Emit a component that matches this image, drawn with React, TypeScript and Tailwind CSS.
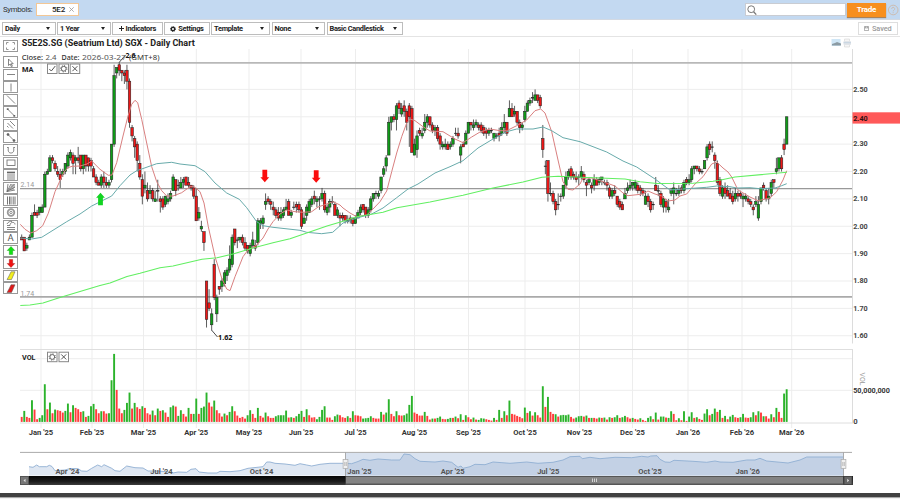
import React from 'react';

type Candle = [number, number, number, number];

// open, high, low, close in cents
const candles: Candle[] = [
  [196, 197, 195, 195], [196, 196, 191, 191], [192, 194, 191, 193], [195, 197, 195, 196], [196, 205, 196, 204], [205, 208, 204, 204],
  [205, 206, 203, 204], [205, 207, 204, 207], [205, 208, 205, 207], [207, 220, 207, 219], [219, 221, 219, 220], [220, 226, 220, 225],
  [225, 226, 223, 224], [223, 224, 220, 221], [220, 222, 218, 219], [219, 221, 214, 217], [219, 221, 218, 220], [220, 223, 219, 223],
  [222, 227, 221, 226], [225, 228, 224, 227], [226, 227, 219, 223], [224, 226, 219, 225], [225, 229, 223, 224], [226, 226, 220, 221],
  [221, 226, 219, 226], [226, 226, 220, 222], [225, 225, 220, 222], [224, 225, 220, 222], [221, 222, 218, 218], [218, 219, 215, 216],
  [216, 217, 215, 215], [215, 219, 214, 218], [218, 220, 214, 216], [216, 218, 214, 215], [215, 217, 214, 216], [217, 230, 216, 230],
  [230, 259, 229, 255], [256, 258, 254, 258], [259, 260, 255, 257], [257, 257, 253, 256], [256, 257, 252, 255], [257, 259, 250, 253],
  [253, 254, 236, 238], [236, 237, 231, 233], [232, 233, 225, 229], [230, 231, 220, 224], [223, 226, 217, 218], [217, 219, 208, 211],
  [214, 220, 212, 215], [213, 216, 209, 210], [212, 215, 210, 213], [213, 214, 209, 210], [209, 213, 209, 210], [213, 217, 209, 213],
  [210, 211, 205, 209], [210, 211, 206, 207], [208, 211, 207, 211], [209, 212, 208, 210], [210, 213, 209, 212], [213, 219, 213, 218],
  [217, 217, 211, 213], [215, 217, 213, 215], [214, 218, 214, 216], [216, 218, 214, 217], [218, 218, 215, 215], [216, 218, 214, 215],
  [215, 215, 213, 214], [214, 215, 210, 211], [211, 214, 202, 202], [203, 207, 202, 205], [199, 202, 198, 200], [198, 198, 191, 194],
  [180, 180, 163, 166], [172, 177, 169, 170], [164, 170, 162, 168], [186, 188, 173, 174], [168, 175, 165, 174], [178, 178, 175, 177],
  [178, 181, 176, 180], [179, 184, 178, 183], [182, 185, 180, 184], [184, 193, 183, 188], [186, 197, 185, 196], [199, 199, 193, 194],
  [195, 196, 192, 195], [195, 196, 194, 196], [196, 197, 193, 194], [194, 196, 191, 192], [193, 193, 190, 191], [190, 194, 189, 193],
  [193, 198, 192, 195], [193, 195, 191, 192], [194, 203, 193, 202], [201, 203, 199, 202], [201, 204, 199, 203], [208, 212, 206, 209],
  [210, 211, 208, 209], [209, 210, 206, 208], [207, 209, 204, 206], [206, 207, 203, 204], [205, 207, 202, 203], [203, 207, 202, 205],
  [204, 207, 203, 206], [206, 210, 206, 207], [209, 210, 204, 204], [204, 206, 203, 205], [207, 209, 206, 207], [208, 209, 205, 207],
  [208, 209, 205, 206], [206, 207, 199, 200], [201, 205, 201, 203], [204, 208, 202, 207], [205, 210, 205, 209], [208, 211, 207, 210],
  [211, 213, 208, 210], [209, 211, 207, 210], [210, 211, 206, 210], [210, 214, 209, 212], [212, 213, 205, 206], [205, 208, 204, 207],
  [207, 210, 205, 209], [209, 211, 208, 209], [208, 209, 204, 204], [204, 207, 203, 206], [204, 205, 200, 203], [204, 205, 202, 203],
  [204, 204, 201, 202], [202, 204, 201, 202], [203, 204, 201, 202], [203, 203, 200, 201], [201, 204, 201, 203], [203, 206, 203, 205],
  [205, 208, 204, 207], [208, 208, 205, 206], [207, 207, 203, 204], [204, 207, 203, 206], [206, 211, 205, 210], [210, 212, 209, 212],
  [212, 213, 210, 212], [211, 213, 210, 212], [213, 218, 212, 218], [219, 222, 218, 221], [222, 226, 220, 225], [226, 240, 226, 238],
  [238, 240, 235, 240], [240, 241, 238, 239], [239, 245, 235, 244], [245, 246, 241, 243], [241, 245, 240, 243], [244, 246, 240, 242],
  [242, 243, 235, 238], [244, 245, 229, 240], [243, 244, 227, 227], [226, 232, 226, 230], [228, 235, 225, 233], [235, 236, 233, 234],
  [233, 236, 232, 234], [235, 241, 234, 238], [238, 241, 236, 240], [240, 240, 236, 237], [237, 238, 234, 235], [235, 237, 233, 236],
  [236, 237, 231, 232], [233, 234, 228, 230], [229, 231, 228, 230], [229, 232, 228, 230], [230, 231, 228, 228], [229, 231, 228, 230],
  [230, 233, 229, 232], [234, 236, 233, 234], [234, 236, 232, 233], [226, 230, 223, 229], [230, 231, 229, 229], [230, 235, 230, 234],
  [234, 238, 234, 238], [238, 238, 235, 237], [236, 239, 235, 237], [237, 239, 236, 238], [237, 238, 235, 236], [237, 238, 234, 235],
  [236, 237, 233, 234], [235, 236, 232, 234], [234, 236, 233, 235], [235, 236, 234, 235], [232, 234, 231, 234], [233, 234, 232, 233],
  [234, 236, 231, 233], [234, 238, 233, 236], [236, 241, 234, 238], [238, 238, 233, 234], [240, 246, 240, 243], [243, 245, 240, 240],
  [241, 244, 240, 242], [242, 242, 237, 238], [238, 239, 234, 236], [236, 238, 235, 237], [239, 244, 238, 242], [242, 246, 242, 245],
  [245, 247, 244, 246], [247, 249, 245, 247], [246, 250, 246, 248], [248, 248, 245, 246], [247, 248, 243, 244], [232, 237, 225, 228],
  [222, 224, 219, 222], [224, 224, 209, 212], [212, 216, 211, 212], [212, 213, 208, 209], [209, 210, 204, 206], [208, 212, 206, 208],
  [211, 212, 209, 211], [211, 215, 210, 215], [215, 220, 214, 218], [218, 221, 217, 220], [221, 222, 217, 218], [219, 220, 217, 218],
  [218, 220, 216, 217], [218, 219, 215, 218], [218, 222, 217, 220], [219, 220, 216, 217], [216, 217, 211, 215], [216, 218, 215, 217],
  [215, 216, 212, 214], [215, 219, 213, 217], [217, 218, 215, 215], [216, 218, 215, 217], [217, 218, 215, 218], [216, 217, 215, 216],
  [216, 217, 213, 215], [214, 215, 210, 211], [211, 214, 210, 213], [213, 215, 211, 212], [211, 211, 207, 208], [209, 210, 206, 207],
  [208, 209, 206, 206], [210, 214, 210, 212], [213, 216, 212, 214], [214, 217, 213, 215], [215, 216, 213, 216], [214, 217, 213, 216],
  [215, 216, 212, 213], [214, 215, 211, 213], [213, 214, 211, 212], [208, 213, 208, 211], [211, 212, 207, 209], [209, 210, 205, 206],
  [208, 209, 206, 208], [215, 218, 213, 213], [213, 215, 211, 213], [212, 213, 207, 208], [207, 211, 205, 210], [209, 210, 205, 207],
  [206, 210, 205, 207], [212, 214, 211, 213], [212, 216, 208, 214], [212, 214, 211, 212], [212, 215, 211, 213], [214, 215, 212, 213],
  [213, 217, 212, 216], [217, 218, 215, 216], [216, 219, 215, 217], [217, 222, 216, 221], [221, 222, 219, 222], [222, 222, 220, 221],
  [221, 222, 219, 220], [220, 221, 219, 220], [221, 224, 221, 224], [225, 230, 224, 229], [230, 231, 226, 228], [229, 231, 227, 229],
  [226, 227, 221, 224], [223, 224, 215, 216], [217, 218, 211, 212], [211, 215, 210, 214], [214, 216, 210, 212], [213, 215, 211, 211],
  [212, 214, 210, 210], [211, 213, 208, 209], [210, 214, 209, 212], [212, 213, 209, 211], [212, 213, 210, 211], [210, 212, 207, 211],
  [210, 212, 209, 211], [210, 211, 208, 209], [209, 210, 207, 208], [207, 208, 204, 206], [208, 211, 207, 209], [203, 211, 202, 208],
  [209, 214, 208, 214], [215, 216, 213, 214], [213, 214, 209, 210], [210, 214, 208, 211], [212, 217, 211, 216], [217, 217, 214, 216],
  [220, 225, 219, 221], [221, 225, 220, 225], [225, 226, 220, 221], [230, 232, 226, 228], [230, 240, 230, 240],
];

// bar heights, negative for down days
const volumes = [
  -15, 33, -15, -12, 65, -37, -8, 12, 20, 113, -38, 58, -26, 37, -35, -33, -28, 33, 55, -29, 50, -42, -38, -30, 32,
  -15, 18, 47, 54, -38, -26, 32, -32, -25, 26, 125, 204, -96, -40, -26, 36, 57, 88, -40, 57, -44, -39, 47, -42, -26,
  -22, 34, -20, 40, -33, 35, -28, -15, 44, 49, -46, 18, 35, -24, -16, 42, -24, 24, 70, -24, 42, 46, 88, -58, -46,
  64, -35, -26, -16, 25, -20, 30, 47, -32, -19, -12, -15, -10, 20, 35, -24, -12, 42, -18, -13, 28, -17, -12, -12, 17,
  20, 20, 20, 34, -13, 14, -12, 17, 24, 33, -15, 38, -20, -13, -14, 8, 15, 36, 47, -13, -13, -6, 17, 22, -20,
  -14, -12, 17, -12, 32, -20, -19, -17, 10, 11, 12, 17, -12, -10, -10, 30, -22, 28, 68, -24, -17, 32, -20, -19, 20,
  25, 51, 78, -28, -24, -19, -19, 30, -18, -7, 10, -10, 12, 16, -9, -8, 9, 12, -12, 16, -11, 23, -6, 20, -14,
  -8, 13, -7, 6, 11, 10, -8, -6, -4, 12, -6, 36, -12, 32, -20, 64, -24, -22, -18, -15, -11, 43, -27, 32, -19,
  29, -20, -13, 107, -45, 75, -30, -24, 23, -16, 20, 21, 20, 22, -15, -10, 13, 17, 18, -16, 19, -12, 12, -12, -10,
  13, -12, 13, -7, 14, -12, 14, 20, -12, 14, 18, -14, -10, 12, -9, -7, 11, -6, -3, 12, 17, -8, 28, -7, 16,
  16, -13, 12, 32, -24, -5, 11, -5, 32, -3, 16, 29, -12, 14, -9, -6, 25, 38, -20, 24, 40, -30, 36, -12, 18,
  -8, 16, 21, -14, -12, 14, 24, -13, -12, 14, 29, -20, 32, -28, 17, -17, -10, 23, -14, 42, -30, -12, 85, 98,
];

const maShort =
  '20.3,224.3 25,229.3 30.7,233 36.7,230.7 42.7,225.7 48.3,213.3 55,191.7 60,180.7 64,172 68,167.7 72,166.3 80,166 87,164 91.7,161 100,169.3 108.3,175.3 112,175 116.7,162.7 123,136 128,116 131.7,104.3 135,100.3 137.7,102.7 141.7,119.3 146.7,143 151.7,166.7 156.7,181.7 161.7,190.7 166.7,196 173,196 181.7,192.7 190,186.7 194,186.7 200,191.7 204,203 208.3,226.7 215,256.7 221.7,278 226.7,289 230,290.7 235,276.7 243,256.7 248,250 256.7,245 263,238 268,229 273,221.7 280,214 286.7,210 295,211.7 303,212.3 311.7,211.7 318,207 326.7,204 333,201.7 340,205 343,208 350,213 356.7,216.7 366.7,215 373,209 380,201.7 386.7,191 391.7,171.7 396.7,153 401.7,136.7 406.7,123 410,119 415,120.7 423,126.7 430,131 443,131.7 455,139 463,142.7 471.7,137 480,132 490,129 500,130.7 506.7,130.7 516.7,125.7 526.7,120 535,110.7 540.7,109 545,113 551.7,131.7 558,160 563,181.7 568,189.3 573,190 580,184 583,178 591.7,178 603,181.7 615,186 623,193 628,195.7 643,194 648,191 655,194 661.7,196 668,201 675,200 680,196 686.7,194 695,184 703,176.7 711.7,164 716.7,162 723,168 728,172 731.7,177 738,190 750,197 758,200.7 770,198 776.7,191.7 783,180 786.7,170.7';

const maMid =
  '20.3,238 31.7,239 41.7,237.3 55,229 66.7,221.7 80,214 91.7,206 101.7,201 111.7,196 120,185.7 130,175 136.7,170.7 141.7,169 156.7,163.7 171.7,162.3 180,164 195,165.7 205,171.7 215,183 226.7,193 239.3,199.3 246.7,207.7 256.7,221.7 263,225.7 273,227.3 300,230.3 306.7,232.3 321.7,233.7 332.7,232.3 343,223 356.7,218 371.7,214 383,208 396.7,197.7 408,189 418,184 435,173 450,166.7 463,160.7 478,148 493,139 506.7,131.7 516.7,129 533,129 543,127 551.7,130.7 563,137.7 580,141.7 593,146.7 606.7,152 623,161 636.7,167 655,179 661.7,184 670,190 686.7,188.7 706.7,187.3 716.7,186 730,186.7 736.7,188 750,187.7 760,188.7 775,188 781.7,185.7 786.7,183.7';

const maLong =
  '20.3,305.5 30,305 43,303 60,297.5 80,291.5 100,285.5 110,283 127,276.5 140,273.3 160,267.7 173,266 202,259.3 217,257.7 233,254 253,248 273,242.7 290,238.7 306.7,233 327,226 343,221.3 356,217 370,214.5 383,212.3 397,207.7 430,202 463,195.3 493,188 523,182 542,177.3 558,176.3 600,178 625,179 640,181.7 657,183.5 693,183.3 713,181.3 722,179.7 735,177 787,172.3';

const navLine =
  '29,466.7 33,467.3 36.7,465 39.3,466.7 46.7,466.7 49.3,465.3 52,466.5 55,470.7 65,470 70,468.5 78,468.7 81.7,471 87,471.3 91.7,468.3 97.7,465 101.7,466.7 104,464.7 111.7,468.3 115,470.7 120,471.3 126.7,466 135,467.7 143,468 148,471 157,471 166.7,471.7 173,473 178,472 186.7,472.3 191,469.3 196,468.7 199,472 208,473 217,473 220,471.3 230,471.7 240,470.7 248,468.3 263,466.7 266.7,462 270,462 275,463.3 285,464 295,465.3 300,463.7 306.7,465 311.7,466 320,464.3 330,463.3 343,463.3 351.7,463.7 358,461.5 363,459.3 370,460.3 378,459 391.7,460 400,460 404,454 410,454.7 415,458.7 420,461.3 435,462 443,461 451.7,462.3 458,467.3 461,466 463,468.3 470,466.7 475,464.3 485,464.7 493,462 510,463.3 526.7,462 538,463.3 553,462.3 563,460 570,456.7 580,456.3 582.3,458.7 590,457.3 600,458.7 615,457.3 631.7,457.7 641.7,456.3 648,457 650.7,456 657,455.7 660,459.3 665,462 670,462.3 674,460.3 693,461.3 706.7,462.3 715,461 720,462 733,462.3 746.7,460 755,460 760,458.3 766.7,461 788,463 800,460 806.7,457 843,457';

const months: [number, string][] = [
  [41, "Jan '25"], [92, "Feb '25"], [143.5, "Mar '25"], [196.3, "Apr '25"], [249, "May '25"], [301, "Jun '25"], [355.5, "Jul '25"],
  [414.5, "Aug '25"], [468.5, "Sep '25"], [525, "Oct '25"], [579.5, "Nov '25"], [632.5, "Dec '25"], [688, "Jan '26"], [742, "Feb '26"], [791.7, "Mar '26"],
];

const navMonths: [number, string][] = [
  [67.5, "Apr '24"], [161.5, "Jul '24"], [261.5, "Oct '24"], [359.5, "Jan '25"], [452.7, "Apr '25"], [548.3, "Jul '25"], [650, "Oct '25"], [747.7, "Jan '26"],
];

const priceTicks = [250, 240, 230, 220, 210, 200, 190, 180, 170, 160];

const xAt = (i: number) => 21.7 + i * 2.567;
const yAt = (p: number) => 89.4 + (250 - p) * 2.737;

const Caret = () => (
  <span className="border-x-[2.5px] border-t-[3px] border-x-transparent border-t-[#222]" />
);

const Dropdown: React.FC<{ label: string; className: string }> = ({ label, className }) => (
  <button className={`flex h-[13px] items-center justify-between border border-[#bdbdbd] bg-white pl-[2px] pr-[5px] shrink-0 ${className}`}>
    <span>{label}</span>
    <Caret />
  </button>
);

const Header = () => (
  <div className="flex h-[20px] items-center border-b border-[#d3d9e2] bg-[#c3d9f1] pl-[3px] text-[8px] text-[#333]">
    <span className="w-[33px] text-[7.8px] tracking-[-0.3px]">Symbols:</span>
    <div className="flex h-[13px] w-[43px] items-center justify-end gap-[4px] border border-[#f3c795] bg-white pr-[4px] font-medium tracking-[-0.2px] text-[#222]">
      <span>5E2</span>
      <svg className="h-[5px] w-[5px]" viewBox="0 0 5 5" stroke="#999" strokeWidth="0.8">
        <path d="M0.3 0.3L4.7 4.7M4.7 0.3L0.3 4.7" />
      </svg>
    </div>
    <div className="ml-auto flex h-[13px] w-[101px] items-center border border-[#c9ccd2] bg-white pl-[1px]">
      <svg className="h-[10px] w-[10px]" viewBox="0 0 10 10" fill="none" stroke="#777" strokeWidth="1">
        <circle cx="4.2" cy="4.2" r="3.4" />
        <path d="M6.6 6.8L9.3 9.6" strokeWidth="1.3" />
      </svg>
    </div>
    <button className="ml-[1px] h-[14px] w-[39px] bg-[#f78f1e] text-[8px] font-bold leading-[13px] tracking-[-0.25px] text-white shadow-[0_1px_1px_#a9825a]">Trade</button>
    <svg className="ml-[1px] mr-[1px] h-[12px] w-[12px]" viewBox="0 0 12 12" fill="none" stroke="#ccbdb2" strokeWidth="1">
      <circle cx="6.2" cy="6" r="4.8" />
      <path d="M4.7 4.9a1.5 1.5 0 1 1 2.3 1.2c-.6.4-.8.6-.8 1.2M6.2 8.2v.9" />
    </svg>
  </div>
);

const Toolbar = () => (
  <div className="flex h-[17px] items-center gap-[1.5px] border-b border-[#e4e4e4] bg-white pl-[2px] pr-[2px] pt-px text-[7.4px] font-bold tracking-[-0.3px] text-[#222]">
    <Dropdown label="Daily" className="w-[53.5px]" />
    <Dropdown label="1 Year" className="w-[53.5px]" />
    <button className="flex h-[13px] w-[50.5px] shrink-0 items-center justify-center gap-[2px] border border-[#bdbdbd]">
      <svg className="h-[5px] w-[5px]" viewBox="0 0 5 5" stroke="#222" strokeWidth="1"><path d="M2.5 0v5M0 2.5h5" /></svg>
      Indicators
    </button>
    <button className="flex h-[13px] w-[45.5px] shrink-0 items-center justify-center gap-[2.5px] border border-[#bdbdbd]">
      <svg className="h-[6px] w-[6px]" viewBox="0 0 6 6" fill="none" stroke="#222">
        <circle cx="3" cy="3" r="1.7" strokeWidth="1.3" />
        <circle cx="3" cy="3" r="2.5" strokeWidth="0.9" strokeDasharray="1 0.96" />
      </svg>
      Settings
    </button>
    <Dropdown label="Template" className="w-[59px]" />
    <Dropdown label="None" className="w-[53.5px]" />
    <Dropdown label="Basic Candlestick" className="w-[76px]" />
    <button className="ml-auto flex h-[13px] w-[40px] items-center justify-center gap-[2.5px] border border-[#dedede] font-medium tracking-[-0.1px] text-[#999]">
      <svg className="h-[5px] w-[5px]" viewBox="0 0 5 5" fill="none" stroke="#999" strokeWidth="0.8">
        <path d="M0.4 0.4h4.2v4.2H0.4zM0.4 1.9h4.2M1.5 0.4v1.5M3.5 0.4v1.5" />
      </svg>
      Saved
    </button>
  </div>
);

const toolIcons = [
  <path d="M3.5 2l0 6.5 1.7-1.5 1.2 2.7 1-.5-1.2-2.5 2 0z" />,
  <path d="M2 5.5h8" />,
  <path d="M6 1.5v8" />,
  <path d="M2 1.5l8 8" />,
  <><path d="M2.5 2l7 7" /><path d="M1.800 1.300h1.800v1.800h-1.800zM8.400 7.900h1.800v1.800h-1.800z" fill="#666" stroke="none" /></>,
  <path d="M2.500 4l5.500 5.500M5 2l5 5M2 7l1.500 1.500" />,
  <><path d="M3 2.500l6 6" /><circle cx="3" cy="2.500" r="1" fill="#555" /><circle cx="9" cy="8.500" r="1" fill="#555" /></>,
  <path d="M2 2.500h1.500c-1 4 .5 5.500 2.500 5.500s3.500-1.500 2.500-5.500h1.500" />,
  <rect x="2" y="3" width="8" height="5.500" />,
  <><path d="M2 2.500h8" strokeWidth="1.700" /><path d="M2 5h8M2 7h8M2 9h8" /></>,
  <path d="M2 9.500l8-1.500M2 9.500l8-4.500M2 9.500L9.500 2M2 9.500L6 2M2 9.500L3 2M6 3h4M5.500 5h4.500M4 7h5" />,
  <path d="M2.500 1.500v8M4.500 1.500v8M6 1.500v8M8.200 1.500v8M10 1.500v8" strokeWidth="0.900" />,
  <><circle cx="6" cy="5.500" r="3.300" strokeWidth="1.800" stroke="#999" /><circle cx="6" cy="5.500" r="1.200" stroke="#777" /></>,
  <path d="M2 9.500h8M2 7.500h8M2 5.500h3c0-4 5-4 5-1M2 4c1-2 3-3 5-2.500" />,
  null,
  <path d="M6 1.500L9.800 5.500H7.700V9.500H4.300V5.500H2.200z" fill="#12e012" stroke="#119911" strokeWidth="0.400" />,
  <path d="M6 9.500L9.800 5.500H7.700V1.500H4.300V5.500H2.200z" fill="#f01010" stroke="#991111" strokeWidth="0.400" />,
  <path d="M6 1.800h4L6.500 9.500H2L4 6z" fill="#f2ee20" stroke="#555" strokeWidth="0.500" />,
  <path d="M6 1.800h4L6.500 9.500H2L4 6z" fill="#e01a1a" stroke="#555" strokeWidth="0.500" />,
];

const DrawingTools = () => (
  <div className="flex w-[20px] shrink-0 flex-col items-start pl-[3px] pt-[3px]">
    <div className="mb-[4px] h-[12px] w-[15px] border border-[#999] bg-white">
      <svg className="h-full w-full" viewBox="0 0 13 10" fill="none" stroke="#888" strokeWidth="0.9">
        <path d="M2.500 3.500v-2h2M8.500 1.500h2v2M10.500 6.500v2h-2M4.500 8.500h-2v-2" />
      </svg>
    </div>
    {toolIcons.map((icon, i) => (
      <div key={i} className="mb-[0.58px] flex h-[12px] w-[15px] shrink-0 items-center justify-center border border-[#999] bg-white text-[9.5px] leading-none text-[#555]">
        {icon ? (
          <svg className="h-[11px] w-[12px]" viewBox="0 0 12 11" fill="none" stroke="#666" strokeWidth="0.8">{icon}</svg>
        ) : 'A'}
      </div>
    ))}
  </div>
);

// small square control drawn next to an indicator name
const Control: React.FC<{ x: number; y: number; kind: 'check' | 'gear' | 'close' }> = ({ x, y, kind }) => (
  <g transform={`translate(${x} ${y})`} fill="none" stroke="#555" strokeWidth="1">
    <rect x="0.5" y="0.5" width="9.5" height="9.5" fill="#fff" stroke="#888" />
    {kind === 'check' && <path d="M2.3 5.5l2 2 4-5" />}
    {kind === 'close' && <path d="M2.700 2.700l5 5M7.700 2.700l-5 5" />}
    {kind === 'gear' && (
      <>
        <circle cx="5.250" cy="5.250" r="2.400" strokeWidth="0.900" />
        <circle cx="5.250" cy="5.250" r="3.200" strokeWidth="1" strokeDasharray="1 1.510" />
      </>
    )}
  </g>
);

const arrowDown = 'M-2.400 -6h4.800v7.500h2L0 6.500L-4.400 1.500h2z';

const Chart = () => (
  <svg className="block h-[456px] w-[880px]" viewBox="20 37 880 456" fontFamily="Roboto, sans-serif">
    {/* grid */}
    <g stroke="#ededed" strokeWidth="1">
      {months.map(([x]) => <path key={x} d={`M${x} 49V428`} />)}
      {priceTicks.map((p) => <path key={p} d={`M20 ${yAt(p)}H852`} />)}
      <path d="M20 358.700H852M20 390.300H852" />
    </g>
    <path d="M852.500 49V343.500M852.500 349V423" stroke="#dcdcdc" />
    <path d="M20 349.500H853M20 423H853" stroke="#dedede" />
    <g fill="none">
      <path d="M20 62.900H852" stroke="#b8b8b8" strokeWidth="1.800" />
      <path d="M20 188.600H852" stroke="#999" strokeWidth="1.200" />
      <path d="M20 296.900H852" stroke="#aaa" strokeWidth="1.600" />
    </g>
    <g fontSize="7" fill="#999">
      <text x="20.500" y="187.200">2.14</text>
      <text x="20.500" y="295.500">1.74</text>
    </g>

    {/* candles */}
    {candles.map(([o, h, l, c], i) => {
      const x = xAt(i);
      const top = yAt(Math.max(o, c));
      const height = Math.max(Math.abs(o - c) * 2.737, 0.5);
      return (
        <g key={i}>
          <path d={`M${x} ${yAt(h)}V${yAt(l)}`} stroke="#333" strokeWidth="0.8" />
          <rect x={x - 1.25} y={top} width="2.5" height={height} fill={c > o ? '#0f9d17' : c < o ? '#ee1717' : '#444'} stroke="#222" strokeWidth="0.55" />
        </g>
      );
    })}

    {/* moving averages */}
    <g fill="none" strokeLinejoin="round">
      <polyline points={maShort} stroke="#d98080" strokeWidth="1" />
      <polyline points={maMid} stroke="#68abab" strokeWidth="1" />
      <polyline points={maLong} stroke="#62ef62" strokeWidth="1.1" />
    </g>

    {/* markers */}
    <path d="M0 -6.500L4.400 -1.500H2.400V6H-2.400V-1.500H-4.400z" transform="translate(100.500 199.300)" fill="#12d322" />
    <path d={arrowDown} transform="translate(264.800 175.800)" fill="#fb0d0d" />
    <path d={arrowDown} transform="translate(316.200 176.300)" fill="#fb0d0d" />
    <path d="M119.500 62L125 55.500M211.500 330L217.500 337" stroke="#222" strokeWidth="0.800" />

    {/* titles */}
    <text x="21.700" y="46.200" fontSize="9.2" fontWeight="700" fill="#222" textLength="173" lengthAdjust="spacingAndGlyphs">S5E2S.SG (Seatrium Ltd) SGX - Daily Chart</text>
    <g fontFamily="Noto Sans, sans-serif" fontSize="7.6" fill="#333">
      <text x="21.700" y="59.800" fontWeight="500" textLength="21.500" lengthAdjust="spacingAndGlyphs">Close:</text>
      <text x="45.500" y="59.800" fill="#555" textLength="11" lengthAdjust="spacingAndGlyphs">2.4</text>
      <text x="61.500" y="59.800" fontWeight="500" textLength="18" lengthAdjust="spacingAndGlyphs">Date:</text>
      <text x="82" y="59.800" fill="#555" textLength="44" lengthAdjust="spacingAndGlyphs">2026-03-27</text>
      <text x="129" y="59.800" textLength="30.500" lengthAdjust="spacingAndGlyphs">(GMT+8)</text>
      <text x="125.500" y="58" fontSize="7" fontWeight="700" fill="#111">2.6</text>
      <text x="218" y="339.800" fontSize="7" fontWeight="700" fill="#111" textLength="14.500" lengthAdjust="spacingAndGlyphs">1.62</text>
    </g>
    <g fontSize="7.4" fontWeight="700" fill="#222">
      <text x="22" y="71.600" textLength="11.500" lengthAdjust="spacingAndGlyphs">MA</text>
      <text x="22" y="359.800" textLength="13.500" lengthAdjust="spacingAndGlyphs">VOL</text>
    </g>
    <Control x={47} y={63.500} kind="check" />
    <Control x={58.500} y={63.500} kind="gear" />
    <Control x={69.700} y={63.500} kind="close" />
    <Control x={47} y={351.700} kind="gear" />
    <Control x={58.500} y={351.700} kind="close" />

    {/* image and print buttons */}
    <rect x="831.500" y="39" width="9" height="7" fill="#cfe6f6" />
    <path d="M832 45.500v-1.500l3-1 2-1 4 1.500v2z" fill="#8c9ba3" />
    <rect x="843.500" y="41" width="7.500" height="4" rx="0.800" fill="#e2e5e9" />
    <path d="M844.500 41v-2h5v2M844.500 45v2h5v-2" fill="#f6f6f6" stroke="#d5d5d5" strokeWidth="0.600" />
    <path d="M843.500 42.700h7.500" stroke="#b9cbe0" strokeWidth="0.700" />

    {/* price axis */}
    <rect x="852.500" y="112.300" width="48" height="11.300" fill="#ff5959" />
    <g fontSize="7.7" fontWeight="700" fill="#444">
      {priceTicks.map((p) => (
        <text key={p} x="853.200" y={yAt(p) + (p === 240 ? 4.2 : 2.3)} fill={p === 240 ? '#301010' : '#444'} textLength="14.500" lengthAdjust="spacingAndGlyphs">{(p / 100).toFixed(2)}</text>
      ))}
      <text x="855" y="383" fontWeight="400" fontSize="7" fill="#999" transform="rotate(90 862.500 380)">VOL</text>
      <text x="853.200" y="392.600" fill="#333" textLength="36.700" lengthAdjust="spacingAndGlyphs">50,000,000</text>
      <text x="853.200" y="424.300">0</text>
    </g>

    {/* volume */}
    {volumes.map((v, i) => {
      const h = Math.abs(v) / 3;
      return <rect key={i} x={xAt(i) - 0.95} y={421.9 - h} width="1.9" height={h} fill={v > 0 ? '#2bb32b' : '#ff3b3b'} />;
    })}

    <g fontSize="7.6" fontWeight="700" fill="#333" textAnchor="middle">
      {months.map(([x, label]) => <text key={label} x={x} y="435.400">{label}</text>)}
    </g>

    {/* navigator */}
    <rect x="345.500" y="453" width="498" height="22.500" fill="#d9e2ef" />
    <polygon points={`29,475.500 ${navLine} 843,475.500`} fill="#dfe7f2" />
    <clipPath id="range"><rect x="345.500" y="452" width="498" height="24" /></clipPath>
    <polygon points={`29,475.500 ${navLine} 843,475.500`} fill="#c3d1e5" clipPath="url(#range)" />
    <polyline points={navLine} fill="none" stroke="#90afd3" strokeWidth="0.900" />
    <path d="M20 452.400H852" stroke="#aaa" />
    <path d="M345.500 452.500V476M843.500 452.500V476" stroke="#999" strokeWidth="0.800" />
    {[345.5, 843.5].map((x) => (
      <g key={x}>
        <rect x={x - 2.4} y="459.500" width="4.800" height="9" fill="#f0f0f0" stroke="#aaa" strokeWidth="0.700" />
        <path d={`M${x - 0.7} 462V466M${x + 0.8} 462V466`} stroke="#999" strokeWidth="0.600" />
      </g>
    ))}
    <g fontSize="7.6" fontWeight="700" fill="#555" textAnchor="middle">
      {navMonths.map(([x, label]) => <text key={label} x={x} y="473.600">{label}</text>)}
    </g>

    {/* scrollbar */}
    <defs>
      <linearGradient id="track" x1="0" y1="0" x2="0" y2="1">
        <stop offset="0" stopColor="#050505" />
        <stop offset="0.600" stopColor="#1b1b1b" />
        <stop offset="1" stopColor="#3c3c3c" />
      </linearGradient>
    </defs>
    <rect x="20" y="476" width="833" height="9" fill="url(#track)" />
    <rect x="345.500" y="476" width="498" height="9" fill="#565656" />
    <rect x="346" y="477" width="497" height="6.500" fill="#838383" />
    <rect x="20.500" y="476.500" width="8" height="8" fill="#777" stroke="#555" />
    <rect x="844" y="476.500" width="8" height="8" fill="#666" stroke="#444" />
    <path d="M25.500 478.800v3.400l-2-1.700zM847.200 478.800v3.400l2-1.700z" fill="#ddd" />
    <path d="M592.500 478.500v3.500M594.500 478.500v3.500M596.500 478.500v3.500" stroke="#ddd" strokeWidth="0.900" />
  </svg>
);

export default function App() {
  return (
    <div className="h-[499px] w-[900px] overflow-hidden bg-white font-['Roboto',sans-serif]">
      <Header />
      <Toolbar />
      <main className="flex h-[456px]">
        <DrawingTools />
        <Chart />
      </main>
      <div className="h-[5px] border-b border-[#aaa] bg-[#414141]" />
      <div className="h-px bg-[#f2f2f2]" />
    </div>
  );
}
